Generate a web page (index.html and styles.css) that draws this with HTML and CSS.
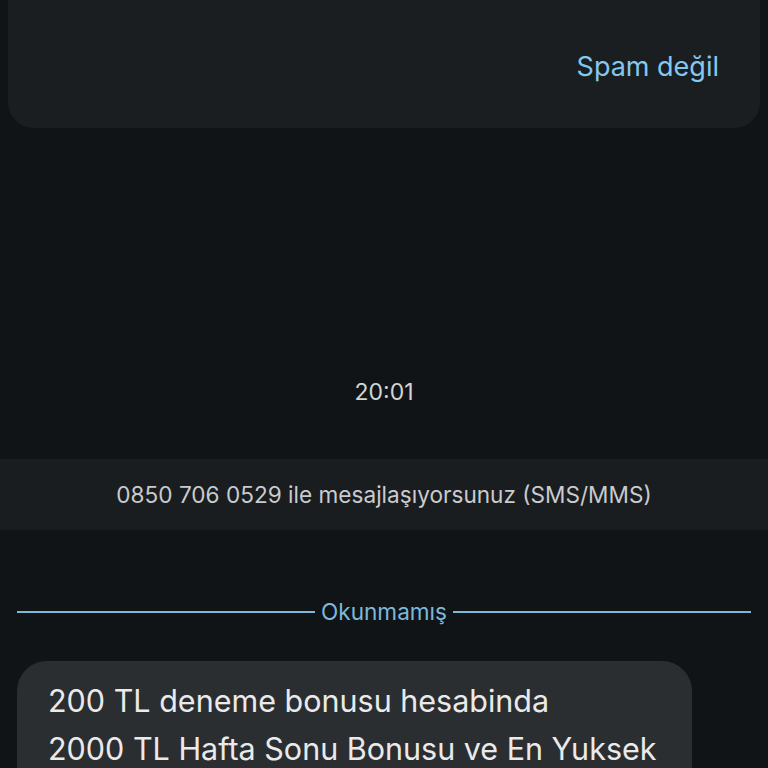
FILE: index.html
```html
<!DOCTYPE html>
<html lang="tr">
<head>
<meta charset="utf-8">
<link rel="stylesheet" href="styles.css">
</head>
<body>
<div class="screen">
  <div class="spam-card">
    <span class="spam-btn">Spam değil</span>
  </div>
  <div class="time">20:01</div>
  <div class="info-band">0850 706 0529 ile mesajlaşıyorsunuz (SMS/MMS)</div>
  <div class="divider">
    <span class="line"></span>
    <span class="divider-text">Okunmamış</span>
    <span class="line"></span>
  </div>
  <div class="bubble">
    <p class="msg"><span class="msg-line">200 TL deneme bonusu hesabinda</span><span class="msg-line">2000 TL Hafta Sonu Bonusu ve En Yuksek</span><span class="msg-line">Oranlar</span></p>
  </div>
</div>
</body>
</html>
```

FILE: styles.css
```css
html, body {
  margin: 0;
  padding: 0;
  background: #111417;
  overflow: hidden;
}
.screen {
  width: 768px;
  height: 768px;
  background: #111417;
  font-family: Inter, Roboto, sans-serif;
  display: flex;
  flex-direction: column;
  overflow: hidden;
}
.screen > * {
  flex-shrink: 0;
}
.spam-card {
  margin: 0 8px;
  height: 128px;
  background: #1b1e21;
  border-radius: 0 0 26px 26px;
  display: flex;
  justify-content: flex-end;
  align-items: flex-start;
  padding: 49px 41px 0 0;
  box-sizing: border-box;
}
.spam-btn {
  color: #82c9f0;
  font-size: 27px;
  line-height: 36px;
}
.time {
  margin-top: 249px;
  text-align: center;
  color: #d2d4d6;
  font-size: 23px;
  line-height: 30px;
}
.info-band {
  margin-top: 52px;
  height: 71px;
  background: #1a1d20;
  color: #c9cbcd;
  font-size: 22.6px;
  display: flex;
  align-items: center;
  justify-content: center;
}
.divider {
  margin: 69px 17px 0 17px;
  display: flex;
  align-items: center;
  gap: 6px;
  height: 26px;
}
.line {
  flex: 1;
  height: 2px;
  background: #7ab8dc;
}
.divider-text {
  color: #7ab8dc;
  font-size: 22.6px;
  line-height: 26px;
}
.bubble {
  margin: 36px 0 0 17px;
  width: 675px;
  background: #2b2e31;
  border-radius: 30px;
  padding: 16px 20px 16px 31px;
  box-sizing: border-box;
}
.msg {
  margin: 0;
  color: #eaeaea;
  font-size: 30.5px;
  line-height: 48px;
}
.msg-line {
  display: block;
  white-space: nowrap;
}
```
